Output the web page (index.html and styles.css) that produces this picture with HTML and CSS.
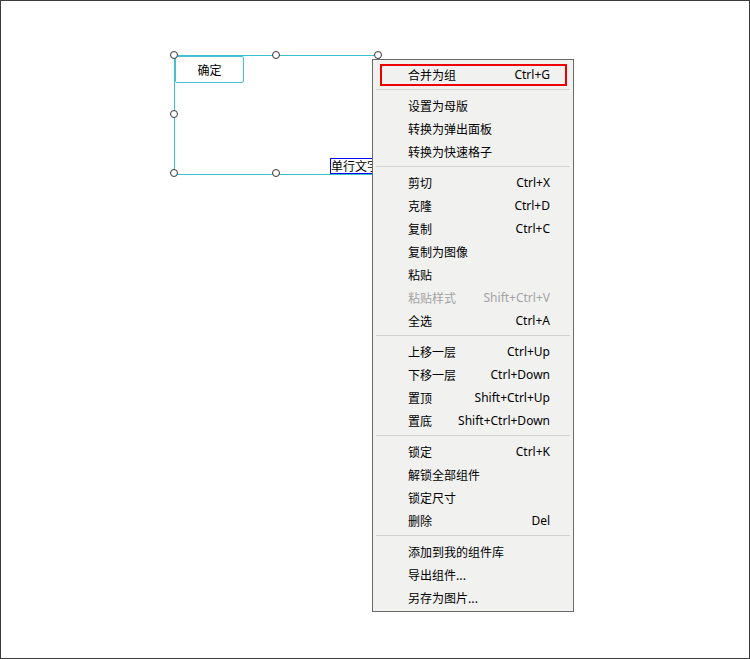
FILE: index.html
```html
<!DOCTYPE html>
<html lang="zh-CN">
<head>
    <meta charset="UTF-8">
    <title>画布</title>
    <link rel="stylesheet" href="styles.css">
</head>
<body>
<div class="frame">
    <!-- selected group on the canvas -->
    <div class="selection"></div>
    <div class="btn-widget">确定</div>
    <div class="text-widget">单行文字</div>
    <span class="handle" style="left:170px;top:51px"></span>
    <span class="handle" style="left:272px;top:51px"></span>
    <span class="handle" style="left:374px;top:51px"></span>
    <span class="handle" style="left:170px;top:110px"></span>
    <span class="handle" style="left:170px;top:169px"></span>
    <span class="handle" style="left:272px;top:169px"></span>

    <!-- context menu -->
    <div class="menu">
        <div class="item hl"><span>合并为组</span><span class="key">Ctrl+G</span></div>
        <div class="sep"></div>
        <div class="item"><span>设置为母版</span></div>
        <div class="item"><span>转换为弹出面板</span></div>
        <div class="item"><span>转换为快速格子</span></div>
        <div class="sep"></div>
        <div class="item"><span>剪切</span><span class="key">Ctrl+X</span></div>
        <div class="item"><span>克隆</span><span class="key">Ctrl+D</span></div>
        <div class="item"><span>复制</span><span class="key">Ctrl+C</span></div>
        <div class="item"><span>复制为图像</span></div>
        <div class="item"><span>粘贴</span></div>
        <div class="item disabled"><span>粘贴样式</span><span class="key">Shift+Ctrl+V</span></div>
        <div class="item"><span>全选</span><span class="key">Ctrl+A</span></div>
        <div class="sep"></div>
        <div class="item"><span>上移一层</span><span class="key">Ctrl+Up</span></div>
        <div class="item"><span>下移一层</span><span class="key">Ctrl+Down</span></div>
        <div class="item"><span>置顶</span><span class="key">Shift+Ctrl+Up</span></div>
        <div class="item"><span>置底</span><span class="key">Shift+Ctrl+Down</span></div>
        <div class="sep"></div>
        <div class="item"><span>锁定</span><span class="key">Ctrl+K</span></div>
        <div class="item"><span>解锁全部组件</span></div>
        <div class="item"><span>锁定尺寸</span></div>
        <div class="item"><span>删除</span><span class="key">Del</span></div>
        <div class="sep"></div>
        <div class="item"><span>添加到我的组件库</span></div>
        <div class="item"><span>导出组件...</span></div>
        <div class="item"><span>另存为图片...</span></div>
    </div>
</div>
</body>
</html>
```

FILE: styles.css
```css
html, body {
    margin: 0;
    padding: 0;
    background: #fff;
}
.frame {
    position: relative;
    width: 750px;
    height: 659px;
    box-sizing: border-box;
    border: 1px solid #3c3c3c;
    background: #fff;
    overflow: hidden;
    font-family: "Noto Sans CJK SC", "Noto Sans", sans-serif;
    font-size: 12px;
    color: #000;
}
.selection {
    position: absolute;
    left: 173px;
    top: 54px;
    width: 204px;
    height: 118px;
    border: 1px solid #3dbfcc;
}
.btn-widget {
    position: absolute;
    left: 174px;
    top: 55px;
    width: 67px;
    height: 25px;
    border: 1px solid #45c2cd;
    border-radius: 2px;
    background: #fff;
    text-align: center;
    line-height: 25px;
}
.text-widget {
    position: absolute;
    left: 329px;
    top: 157px;
    width: 60px;
    height: 14px;
    border: 1px solid #0000ff;
    background: #fff;
    font-size: 12px;
    line-height: 14px;
    white-space: nowrap;
}
.handle {
    position: absolute;
    width: 6px;
    height: 6px;
    margin: -1px 0 0 -1px;
    border: 1px solid #333;
    border-radius: 50%;
    background: #fff;
}
.menu {
    position: absolute;
    left: 371px;
    top: 58px;
    width: 200px;
    padding: 3px 0 2px;
    border: 1px solid #6a6a6a;
    background: #f1f1f0;
}
.item {
    position: relative;
    display: flex;
    justify-content: space-between;
    align-items: center;
    height: 23px;
    padding: 0 23px 0 35px;
    white-space: nowrap;
}
.key {
    font-family: "Noto Sans", "Open Sans", sans-serif;
}
.item.disabled {
    color: #a3a3a3;
}
.item.hl::after {
    content: "";
    position: absolute;
    left: 7px;
    right: 6px;
    top: 1px;
    bottom: 0;
    border: 2px solid #ee0000;
}
.sep {
    height: 1px;
    margin: 3px 3px 4px;
    background: #d4d4d4;
}
```
